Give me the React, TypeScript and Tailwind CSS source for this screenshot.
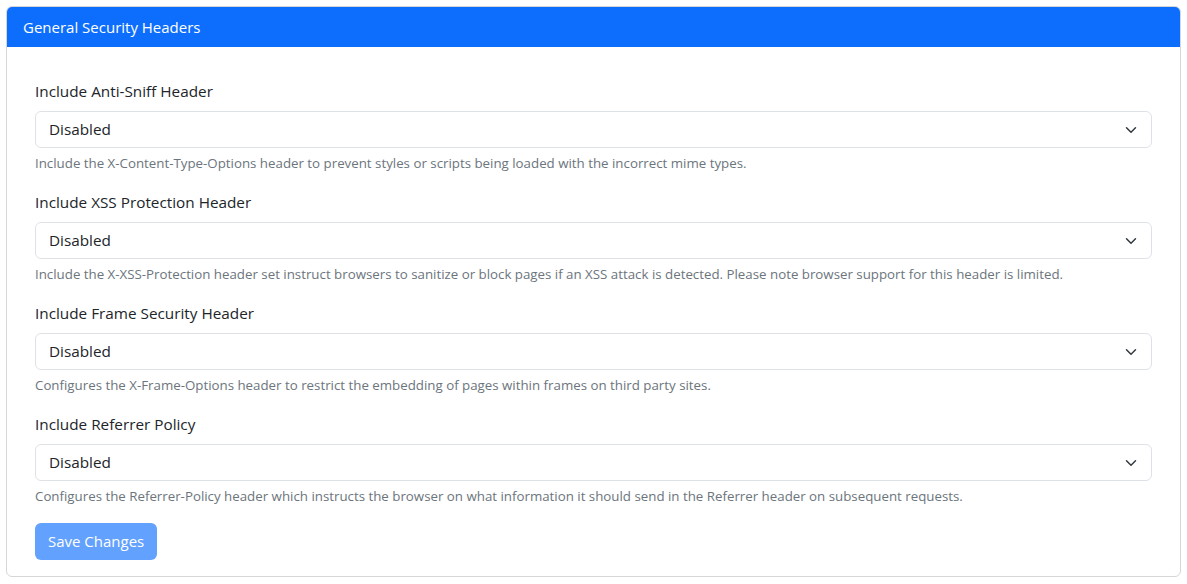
import React from 'react';

const fields = [
  {
    label: 'Include Anti-Sniff Header',
    help: 'Include the X-Content-Type-Options header to prevent styles or scripts being loaded with the incorrect mime types.',
  },
  {
    label: 'Include XSS Protection Header',
    help: 'Include the X-XSS-Protection header set instruct browsers to sanitize or block pages if an XSS attack is detected. Please note browser support for this header is limited.',
  },
  {
    label: 'Include Frame Security Header',
    help: 'Configures the X-Frame-Options header to restrict the embedding of pages within frames on third party sites.',
  },
  {
    label: 'Include Referrer Policy',
    help: 'Configures the Referrer-Policy header which instructs the browser on what information it should send in the Referrer header on subsequent requests.',
  },
];

const Chevron = () => (
  <svg width="16" height="12" viewBox="0 0 16 16" fill="none">
    <path d="m2 5 6 6 6-6" stroke="#343a40" strokeWidth="2" strokeLinecap="round" strokeLinejoin="round" />
  </svg>
);

const App = () => {
  return (
    <div className="p-[6px] bg-white" style={{ fontFamily: '"Open Sans", "Noto Sans", sans-serif' }}>
      <div className="border border-[#d6d6d6] rounded-[6px] overflow-hidden">
        <div className="h-[40px] bg-[#0d6efd] px-[16px] flex items-center text-white text-[15px]">
          General Security Headers
        </div>

        <div className="px-[28px] pt-[33px] pb-[16px]">
          {fields.map((f) => (
            <div key={f.label} className="mb-[18px]">
              <div className="text-[15.3px] leading-[22px] text-[#212529] mb-[9px]">{f.label}</div>
              <div className="h-[37px] border border-[#dee2e6] rounded-[6px] flex items-center justify-between pl-[13px] pr-[12px] text-[15.3px] text-[#212529]">
                <span>Disabled</span>
                <Chevron />
              </div>
              <div className="mt-[5px] text-[13.3px] leading-[20px] text-[#6c757d]">{f.help}</div>
            </div>
          ))}

          <button className="-mt-[1px] h-[37px] px-[13px] rounded-[6px] bg-[#62a1fe] text-white text-[15px]">
            Save Changes
          </button>
        </div>
      </div>
    </div>
  );
};

export default App;
